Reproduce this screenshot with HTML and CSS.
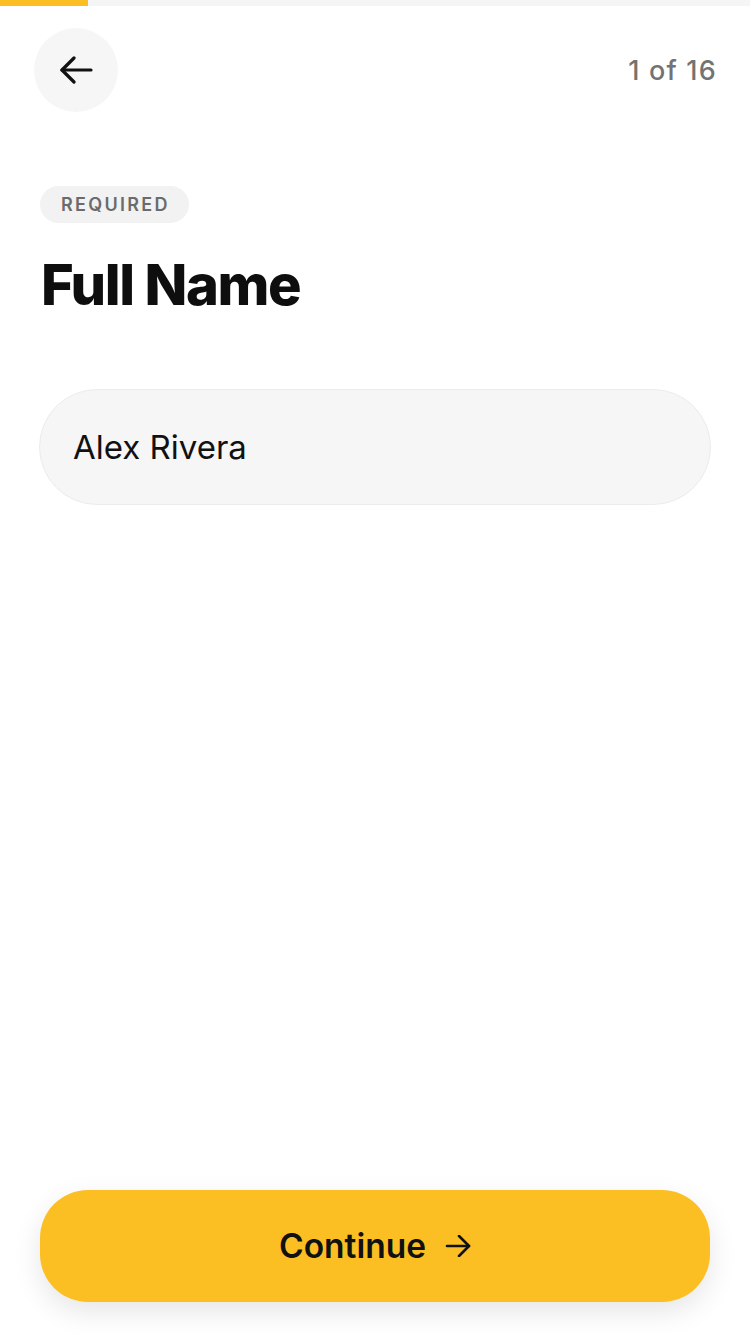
FILE: index.html
```html
<!DOCTYPE html>
<html lang="en">
<head>
<meta charset="utf-8">
<meta name="viewport" content="width=750">
<title>Full Name</title>
<link rel="stylesheet" href="styles.css">
</head>
<body>
<div class="screen">
  <div class="progress"><div class="progress-fill" style="width: 88px"></div></div>
  <header class="header">
    <button class="back" type="button" aria-label="Back">
      <svg width="34" height="28" viewBox="0 0 34 28" fill="none" stroke="#111" stroke-width="3.2" stroke-linecap="round" stroke-linejoin="round">
        <path d="M32 14H3"/>
        <path d="M15 2L3 14l12 12"/>
      </svg>
    </button>
    <span class="counter">1 of 16</span>
  </header>
  <main class="content">
    <span class="badge">REQUIRED</span>
    <h1 class="title">Full Name</h1>
    <input class="field" type="text" value="Alex Rivera">
  </main>
  <footer class="footer">
    <button class="continue" type="button">
      <span>Continue</span>
      <svg width="26" height="22" viewBox="0 0 26 22" fill="none" stroke="#111" stroke-width="2.6" stroke-linecap="round" stroke-linejoin="round">
        <path d="M2 11h22"/>
        <path d="M14 1l10 10-10 10"/>
      </svg>
    </button>
  </footer>
</div>
</body>
</html>
```

FILE: styles.css
```css
html, body {
  margin: 0;
  padding: 0;
  background: #ffffff;
}

body {
  font-family: Inter, "Liberation Sans", sans-serif;
  color: #111111;
}

.screen {
  min-height: 100vh;
  display: flex;
  flex-direction: column;
  box-sizing: border-box;
}

.progress {
  height: 6px;
  background: #f5f5f5;
}

.progress-fill {
  height: 100%;
  background: #fbbf24;
}

.header {
  display: flex;
  align-items: center;
  justify-content: space-between;
  padding: 22px 33px 0 34px;
}

.back {
  width: 84px;
  height: 84px;
  border-radius: 50%;
  border: none;
  background: #f6f6f6;
  display: flex;
  align-items: center;
  justify-content: center;
  padding: 0;
  margin: 0;
}

.counter {
  font-size: 27px;
  color: #737373;
  font-weight: 500;
  letter-spacing: 1.2px;
}

.content {
  display: flex;
  flex-direction: column;
  align-items: flex-start;
  padding: 74px 39px 0 39px;
  flex: 1;
}

.badge {
  display: inline-block;
  height: 37px;
  line-height: 37px;
  padding: 0 19px 0 21px;
  margin-left: 1px;
  border-radius: 19px;
  background: #f2f2f2;
  color: #6b6b6b;
  font-size: 18px;
  font-weight: 600;
  letter-spacing: 2.3px;
}

.title {
  margin: 30px 0 0 2px;
  font-size: 56px;
  line-height: 64px;
  font-weight: 800;
  letter-spacing: -1.4px;
  color: #0e0e0e;
}

.field {
  box-sizing: border-box;
  width: 100%;
  height: 116px;
  margin-top: 72px;
  padding: 0 33px;
  border: 1px solid #ececec;
  border-radius: 58px;
  background: #f6f6f6;
  font-family: Inter, "Liberation Sans", sans-serif;
  font-size: 33px;
  color: #111111;
  outline: none;
}

.footer {
  padding: 0 40px 32px 40px;
}

.continue {
  width: 100%;
  height: 112px;
  border: none;
  border-radius: 48px;
  background: #fbbf24;
  box-shadow: 0 10px 28px rgba(0, 0, 0, 0.1);
  display: flex;
  align-items: center;
  justify-content: center;
  gap: 19px;
  font-family: Inter, "Liberation Sans", sans-serif;
  font-size: 33.5px;
  font-weight: 600;
  color: #111111;
  padding: 0;
}
```
